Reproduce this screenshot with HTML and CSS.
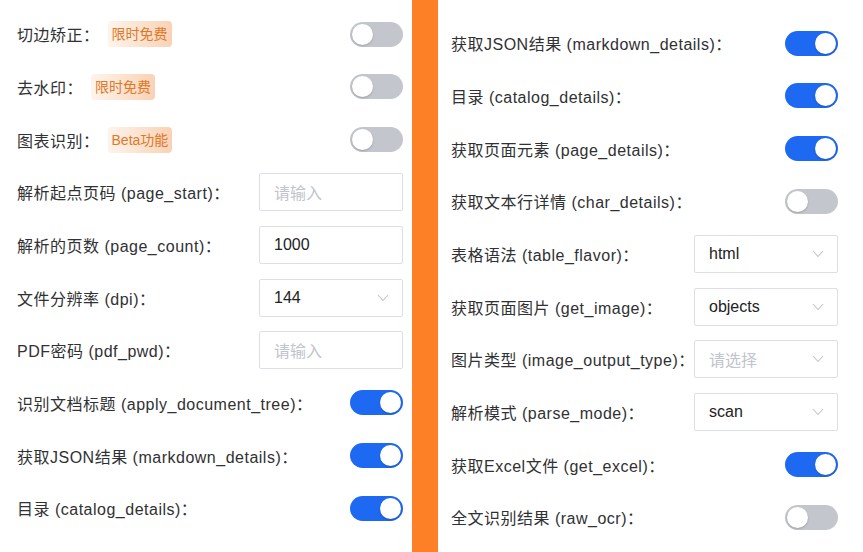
FILE: index.html
```html
<!DOCTYPE html>
<html lang="zh-CN">
<head>
  <meta charset="UTF-8" />
  <meta name="viewport" content="width=device-width, initial-scale=1.0"/>
  <title>解析参数设置</title>
  <link rel="stylesheet" href="styles.css">
</head>
<body>
  <div class="page">
    <div class="panel panel-left">
      <div class="row">
        <span class="label">切边矫正：</span>
        <span class="badge">限时免费</span>
        <span class="switch"></span>
      </div>
      <div class="row">
        <span class="label">去水印：</span>
        <span class="badge">限时免费</span>
        <span class="switch"></span>
      </div>
      <div class="row">
        <span class="label">图表识别：</span>
        <span class="badge">Beta功能</span>
        <span class="switch"></span>
      </div>
      <div class="row">
        <span class="label">解析起点页码 (page_start)：</span>
        <div class="field"><span class="placeholder">请输入</span></div>
      </div>
      <div class="row">
        <span class="label">解析的页数 (page_count)：</span>
        <div class="field"><span class="value">1000</span></div>
      </div>
      <div class="row">
        <span class="label">文件分辨率 (dpi)：</span>
        <div class="field select"><span class="value">144</span>
          <svg class="arrow" width="12" height="8" viewBox="0 0 12 8"><polyline points="1,1 6,6.5 11,1" fill="none" stroke="#c0c4cc" stroke-width="1.1"/></svg>
        </div>
      </div>
      <div class="row">
        <span class="label">PDF密码 (pdf_pwd)：</span>
        <div class="field"><span class="placeholder">请输入</span></div>
      </div>
      <div class="row">
        <span class="label">识别文档标题 (apply_document_tree)：</span>
        <span class="switch on"></span>
      </div>
      <div class="row">
        <span class="label">获取JSON结果 (markdown_details)：</span>
        <span class="switch on"></span>
      </div>
      <div class="row">
        <span class="label">目录 (catalog_details)：</span>
        <span class="switch on"></span>
      </div>
    </div>

    <div class="divider"></div>

    <div class="panel panel-right">
      <div class="row">
        <span class="label">获取JSON结果 (markdown_details)：</span>
        <span class="switch on"></span>
      </div>
      <div class="row">
        <span class="label">目录 (catalog_details)：</span>
        <span class="switch on"></span>
      </div>
      <div class="row">
        <span class="label">获取页面元素 (page_details)：</span>
        <span class="switch on"></span>
      </div>
      <div class="row">
        <span class="label">获取文本行详情 (char_details)：</span>
        <span class="switch"></span>
      </div>
      <div class="row">
        <span class="label">表格语法 (table_flavor)：</span>
        <div class="field select"><span class="value">html</span>
          <svg class="arrow" width="12" height="8" viewBox="0 0 12 8"><polyline points="1,1 6,6.5 11,1" fill="none" stroke="#c0c4cc" stroke-width="1.1"/></svg>
        </div>
      </div>
      <div class="row">
        <span class="label">获取页面图片 (get_image)：</span>
        <div class="field select"><span class="value">objects</span>
          <svg class="arrow" width="12" height="8" viewBox="0 0 12 8"><polyline points="1,1 6,6.5 11,1" fill="none" stroke="#c0c4cc" stroke-width="1.1"/></svg>
        </div>
      </div>
      <div class="row">
        <span class="label">图片类型 (image_output_type)：</span>
        <div class="field select"><span class="placeholder">请选择</span>
          <svg class="arrow" width="12" height="8" viewBox="0 0 12 8"><polyline points="1,1 6,6.5 11,1" fill="none" stroke="#c0c4cc" stroke-width="1.1"/></svg>
        </div>
      </div>
      <div class="row">
        <span class="label">解析模式 (parse_mode)：</span>
        <div class="field select"><span class="value">scan</span>
          <svg class="arrow" width="12" height="8" viewBox="0 0 12 8"><polyline points="1,1 6,6.5 11,1" fill="none" stroke="#c0c4cc" stroke-width="1.1"/></svg>
        </div>
      </div>
      <div class="row">
        <span class="label">获取Excel文件 (get_excel)：</span>
        <span class="switch on"></span>
      </div>
      <div class="row">
        <span class="label">全文识别结果 (raw_ocr)：</span>
        <span class="switch"></span>
      </div>
    </div>
  </div>
</body>
</html>
```

FILE: styles.css
```css
body {
  margin: 0;
  background-color: #fff;
  font-family: "Liberation Sans", "Noto Sans CJK SC", sans-serif;
  color: #303133;
  overflow: hidden;
}
.page {
  display: flex;
  height: 552px;
}
.panel {
  box-sizing: border-box;
}
.panel-left {
  flex-shrink: 0;
  width: 412px;
  padding: 8px 9px 0 17px;
}
.panel-right {
  flex: 1;
  min-width: 0;
  padding: 17px 25px 0 13px;
}
.divider {
  flex-shrink: 0;
  width: 26px;
  background-color: #fd8026;
}
.row {
  display: flex;
  align-items: center;
  height: 52.67px;
}
.label {
  min-width: 0;
  font-size: 16px;
  letter-spacing: 0.5px;
  white-space: nowrap;
}
.badge {
  margin-left: 8px;
  padding: 0 4px;
  height: 26px;
  line-height: 26px;
  font-size: 14px;
  color: #e0782a;
  border-radius: 4px;
  background: linear-gradient(90deg, #fef4ec, #f9d2b4);
}
.switch {
  margin-left: auto;
  position: relative;
  width: 53px;
  height: 25px;
  border-radius: 13px;
  background-color: #c3c6cd;
  flex-shrink: 0;
}
.switch::after {
  content: "";
  position: absolute;
  top: 2px;
  left: 2px;
  width: 21px;
  height: 21px;
  border-radius: 50%;
  background: #fff;
  box-shadow: 0 1px 2px rgba(0, 0, 0, 0.2);
}
.switch.on {
  background-color: #1e69f1;
}
.switch.on::after {
  left: 30px;
}
.field {
  margin-left: auto;
  flex-shrink: 0;
  box-sizing: border-box;
  width: 144px;
  height: 38px;
  border: 1px solid #dcdfe6;
  border-radius: 2px;
  padding: 0 14px;
  display: flex;
  align-items: center;
  font-size: 16px;
}
.field .value {
  color: #222;
}
.field .placeholder {
  color: #c0c4cc;
}
.select .arrow {
  margin-left: auto;
  margin-right: -1px;
}
```
